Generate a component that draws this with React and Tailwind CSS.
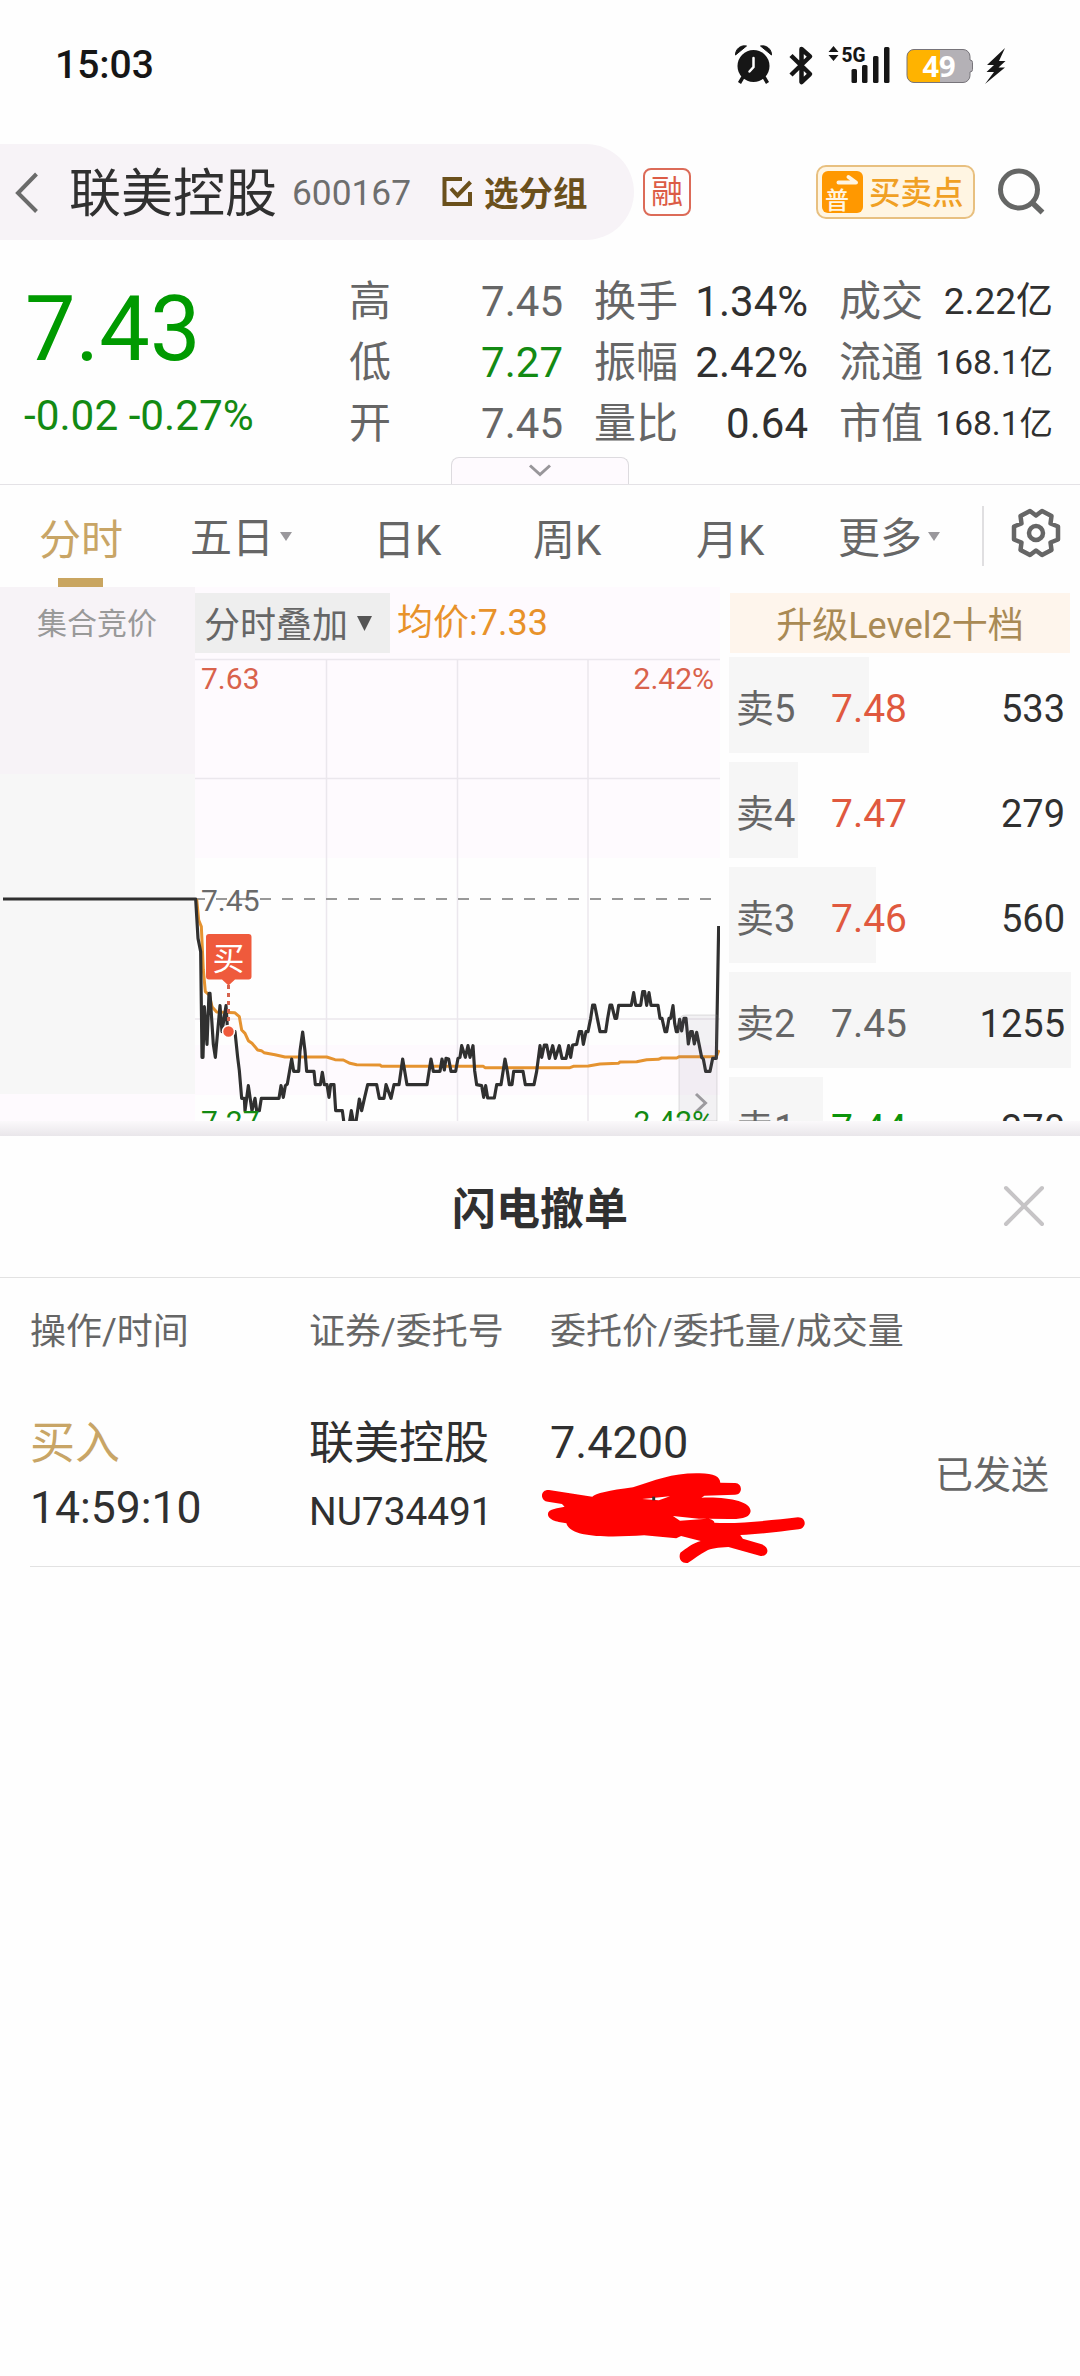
import clsx from "clsx";

const stats = [
  [
    { label: "高", value: "7.45", color: "text-[#666]" },
    { label: "低", value: "7.27", color: "text-[#138a13]" },
    { label: "开", value: "7.45", color: "text-[#666]" },
  ],
  [
    { label: "换手", value: "1.34%" },
    { label: "振幅", value: "2.42%" },
    { label: "量比", value: "0.64" },
  ],
  [
    { label: "成交", value: "2.22亿", size: "text-[37px]" },
    { label: "流通", value: "168.1亿", size: "text-[33.5px]" },
    { label: "市值", value: "168.1亿", size: "text-[33.5px]" },
  ],
];

const asks = [
  { label: "卖5", price: "7.48", qty: "533", bar: 140, color: "text-[#e0593f]" },
  { label: "卖4", price: "7.47", qty: "279", bar: 69, color: "text-[#e0593f]" },
  { label: "卖3", price: "7.46", qty: "560", bar: 147, color: "text-[#e0593f]" },
  { label: "卖2", price: "7.45", qty: "1255", bar: 342, color: "text-[#666]" },
  { label: "卖1", price: "7.44", qty: "370", bar: 94, color: "text-[#0b940b]" },
];

// both series are in thirds of a pixel, relative to (190, 860)
const pricePoints =
  "-561,117 17,117 24,235 32,275 36,592 39,592 43,440 51,553 57,400 60,400 70,553 76,592 90,437 96,515 108,437 113,515 135,515 143,592 148,632 155,715 163,715 165,752 175,677 186,752 195,715 200,752 208,752 214,715 267,715 273,677 280,712 286,677 292,672 305,597 311,634 326,634 330,573 338,516 345,573 350,634 372,634 376,674 391,674 397,637 403,674 411,674 417,712 422,674 432,674 437,752 457,752 462,790 478,790 484,752 490,785 498,785 508,717 515,752 524,712 533,674 560,674 568,715 582,715 588,674 603,715 612,674 627,674 638,597 651,674 711,674 723,597 730,634 750,634 756,597 763,630 768,595 776,597 783,634 797,634 804,595 810,592 815,557 826,592 834,557 840,592 849,557 854,632 860,674 875,677 881,712 887,677 893,714 913,714 920,674 933,674 945,597 952,634 958,674 966,674 971,634 999,634 1006,674 1032,674 1040,634 1050,557 1055,592 1063,555 1070,555 1078,595 1088,557 1096,595 1108,557 1116,595 1128,595 1136,557 1142,592 1148,555 1160,553 1168,515 1175,515 1180,553 1188,515 1194,515 1202,475 1208,435 1214,435 1222,475 1230,515 1247,515 1253,475 1260,435 1265,435 1275,475 1280,475 1286,436 1324,436 1331,398 1337,436 1352,436 1358,395 1364,395 1370,436 1377,398 1383,436 1404,436 1410,475 1416,475 1425,515 1430,515 1437,475 1442,475 1449,437 1454,490 1459,515 1463,515 1469,478 1475,513 1482,475 1488,475 1495,552 1502,515 1507,515 1513,552 1520,517 1528,557 1535,592 1540,597 1547,634 1560,634 1568,595 1579,595 1586,198";

const averagePoints =
  "20,117 26,180 34,200 40,330 46,395 58,405 66,440 80,456 134,458 148,470 155,510 165,520 175,542 186,550 203,570 214,572 222,578 255,584 285,591 410,591 435,599 460,600 480,610 500,614 570,615 575,619 880,619 885,623 1140,623 1150,619 1195,618 1230,612 1285,610 1290,606 1340,605 1370,599 1405,598 1415,594 1460,594 1468,590 1579,590 1587,570";

function StatusBar() {
  return (
    <div className="flex h-[144px] shrink-0 items-start justify-between pt-[41px] pl-[55px] text-[#161616]">
      <div className="text-[39px] leading-[48px] font-[550]">15:03</div>
      <svg width="345" height="50" viewBox="735 41 345 50" fill="currentColor">
        {/* alarm */}
        <circle cx="753.5" cy="66" r="16" />
        <path d="M735.5 55a9 9 0 0 1 11-9zM771.500 55a9 9 0 0 0-11-9z" stroke="currentColor" strokeLinejoin="round" />
        <path d="m743 77-3.500 6M764 77l3.500 6" stroke="currentColor" strokeWidth="3.500" />
        <path d="M753.500 58v9l-4 4.500" fill="none" stroke="#fff" strokeWidth="2.500" strokeLinecap="round" />
        {/* bluetooth */}
        <path d="M791 55.500 810 74l-8.500 8V49l8.500 7.500L791 75" fill="none" stroke="currentColor" strokeWidth="4.500" strokeLinejoin="round" />
        {/* signal */}
        <path d="m833.500 46 5 6h-10zM833.500 61l5-6h-10z" />
        <text x="841.500" y="61.500" fontSize="20.500" fontWeight="800" textLength="24" lengthAdjust="spacingAndGlyphs">5G</text>
        <rect x="851.500" y="69" width="5.500" height="14" rx="1.500" />
        <rect x="862" y="65" width="5.500" height="18" rx="1.500" />
        <rect x="873" y="56" width="5.500" height="27" rx="1.500" />
        <rect x="884" y="47" width="5.500" height="36" rx="1.500" />
        {/* battery */}
        <path d="M914 49.500h49a7 7 0 0 1 7 7v3.500q2.500 0 2.500 2.500v7q0 2.500-2.500 2.500V75.500a7 7 0 0 1-7 7h-49a7 7 0 0 1-7-7v-19a7 7 0 0 1 7-7z" fill="#b4b1b6" />
        <path d="M940 49.500h-26a7 7 0 0 0-7 7v19a7 7 0 0 0 7 7h26z" fill="#ffb300" />
        <path d="M914 49.500h49a7 7 0 0 1 7 7v3.500q2.500 0 2.500 2.500v7q0 2.500-2.500 2.500V75.500a7 7 0 0 1-7 7h-49a7 7 0 0 1-7-7v-19a7 7 0 0 1 7-7z" fill="none" stroke="#77747a" />
        <text x="939" y="76.500" fontSize="29" fontWeight="700" fill="#fff" textAnchor="middle" fontFamily="Noto Sans">49</text>
        <path d="m1005 48-18 17h7l-7.500 7h7.500l-9 12 20-16.500h-6.500l7-6.500h-6.500z" />
      </svg>
    </div>
  );
}

function Header() {
  return (
    <div className="flex h-24 shrink-0 items-center">
      <div className="flex h-24 w-[634px] items-center rounded-r-full bg-[#f7f3f7]">
        <svg className="ml-[14px]" width="26" height="44" viewBox="0 0 26 44" fill="none" stroke="#6b6b6b" strokeWidth="4">
          <path d="M22.500 4 4 23l18.500 18.500" />
        </svg>
        <div className="ml-[29px] w-[223px] pt-[6px] text-[52px] leading-[80px] text-[#303030]">联美控股</div>
        <div className="w-[150px] pt-[2px] text-[35.300px] leading-[80px] text-[#6e6e6e]">600167</div>
        <svg width="32" height="32" viewBox="0 0 32 32" fill="none" stroke="#6b501c" strokeWidth="4">
          <path d="M20 3H2.500v25H28V16" />
          <path d="m9 12.500 6.500 7L28.500 6" />
        </svg>
        <div className="ml-[10px] pt-[3px] text-[34.500px] leading-[80px] font-bold text-[#6b501c]">选分组</div>
      </div>
      <div className="ml-[9px] flex size-12 items-center justify-center rounded-lg border-2 border-[#dc6b58] text-[32px] leading-none text-[#dc5c46]">
        融
      </div>
      <div className="ml-[125px] flex h-[54px] w-[159px] items-center rounded-[10px] border-2 border-[#e8c080] bg-[#fff5e2] pl-[4px]">
        <svg width="41" height="42" viewBox="0 0 41 42">
          <rect width="41" height="42" rx="6" fill="#ff9800" />
          <path d="M16.500 11.500h17.500l-7.500-5.500" fill="none" stroke="#fff5e2" strokeWidth="4" strokeLinecap="round" strokeLinejoin="round" />
          <text x="3" y="37.500" fontSize="24" fontWeight="500" fill="#fff5e2">普</text>
        </svg>
        <div className="ml-[6px] pt-[3px] text-[31.500px] leading-[46px] font-medium text-[#f0a024]">买卖点</div>
      </div>
      <svg className="ml-[19px]" width="54" height="54" viewBox="0 0 54 54" fill="none" stroke="#656665" strokeWidth="5">
        <circle cx="25" cy="24.500" r="18.500" />
        <path d="m38 37.500 10.500 10" strokeWidth="5.500" />
      </svg>
    </div>
  );
}

function Quote() {
  return (
    <div className="relative flex h-[245px] shrink-0 border-b border-[#e4e2e6] pt-[31px]">
      <div className="w-[349px] pl-[24px] text-[#009a00]">
        <div className="h-[116px] pl-px text-[90px] leading-[118px]">7.43</div>
        <div className="text-[42.300px] leading-[58px] text-[#138a13]">-0.02 -0.27%</div>
      </div>
      {stats.map((column, i) => (
        <div key={i} className={clsx(i === 0 && "w-[214px]", i === 1 && "ml-[31px] w-[214px]", i === 2 && "ml-[31px] w-[214px]")}>
          {column.map((item) => (
            <div key={item.label} className="flex h-[61px] justify-between text-[42px] leading-[62px]">
              <span className="text-[#666]">{item.label}</span>
              <span className={clsx(item.color || "text-[#303030]", item.size)}>{item.value}</span>
            </div>
          ))}
        </div>
      ))}
      <div className="absolute bottom-0 left-[451px] flex h-[27px] w-[178px] justify-center rounded-t-lg border border-b-0 border-[#dddbdf] bg-[#fefafe]">
        <svg width="24" height="20" viewBox="0 0 24 20" fill="none" stroke="#98969a" strokeWidth="3">
          <path d="m2 7.500 10 9 10-9" />
        </svg>
      </div>
    </div>
  );
}

function Caret() {
  return (
    <svg className="ml-1.5" width="12" height="9" viewBox="0 0 12 9">
      <path d="M0 0h12L6 9z" fill="#9a989c" />
    </svg>
  );
}

function Tabs() {
  return (
    <div className="flex h-[102px] shrink-0 text-[42px] leading-[111px] text-[#666]">
      <div className="flex w-[150px] flex-col pl-[39px] text-[#c8a566]">
        <span className="h-[93px]">分时</span>
        <span className="ml-[19px] h-[9px] w-[45px] bg-[#c9a560]" />
      </div>
      <div className="flex h-[102px] w-[223px] items-center pl-[40px]">
        <span className="pt-[5px] leading-[90px]">五日</span>
        <Caret />
      </div>
      <div className="w-[160px]">日K</div>
      <div className="w-[163px]">周K</div>
      <div className="w-[142px]">月K</div>
      <div className="flex h-[102px] w-[144px] items-center">
        <span className="pt-[5px] leading-[90px]">更多</span>
        <Caret />
      </div>
      <div className="mt-[21px] h-[60px] w-[2px] bg-[#e0dfe1]" />
      <svg className="mt-[22px] ml-[26px]" width="52" height="52" viewBox="-26 -26 52 52" fill="none" stroke="#666" strokeWidth="4.500" strokeLinejoin="round">
        <path d="M-6-22 0-17.500 6-22 15.500-17 14.500-9.500 22-6.500V6.500L14.500 9.500 15.500 17 6 22 0 17.500-6 22-15.500 17-14.500 9.500-22 6.500V-6.500L-14.500-9.500-15.500-17z" />
        <circle r="7" />
      </svg>
    </div>
  );
}

function Chart() {
  return (
    <div className="w-[720px]">
      <div className="flex h-[66px] bg-[#fefafe]">
        <div className="w-[195px] bg-[#f7f3f7] pl-[37px] text-[30px] leading-[74px] text-[#999]">集合竞价</div>
        <div className="mt-[6px] flex h-[60px] w-[195px] items-center bg-[#eee] pl-[9px] text-[36px] text-[#666]">
          <span className="pt-[5px] leading-[54px]">分时叠加</span>
          <svg className="ml-[9px]" width="15" height="15" viewBox="0 0 15 15">
            <path d="M0 0h15L7.500 15z" fill="#555" />
          </svg>
        </div>
        <div className="ml-[7px] text-[36px] leading-[73px] text-[#e8922a]">均价:7.33</div>
      </div>
      <svg className="block" width="720" height="468" viewBox="0 653 720 468" fontSize="30">
        <rect y="653" width="195" height="121" fill="#f7f3f7" />
        <rect y="774" width="195" height="320" fill="#f7f7f7" />
        <rect y="1094" width="195" height="27" fill="#fefafe" />
        <rect x="195" y="653" width="525" height="205" fill="#fefafe" />
        <rect x="195" y="1045" width="525" height="50" fill="#fefafe" />
        <path d="M195 659.500h525M195 778.500h525M195 1019h525M326.500 659v462M457.500 659v462M588 659v462" stroke="#ebe7ed" strokeWidth="1.500" />
        <path d="M194 899h517" stroke="#999" strokeWidth="2" strokeDasharray="11 11" />
        <text x="201" y="689" fill="#d9624c">7.63</text>
        <text x="714" y="689" textAnchor="end" fill="#d9624c">2.42%</text>
        <text x="201" y="911" fill="#6a6a6a">7.45</text>
        <g transform="translate(190 860) scale(.333333)" fill="none" strokeLinejoin="round">
          <polyline points={averagePoints} stroke="#e59330" strokeWidth="9" />
          <polyline points={pricePoints} stroke="#303030" strokeWidth="9.500" />
        </g>
        <text x="201" y="1132" fill="#138a13">7.27</text>
        <path d="M679 1121v-99q0-7 7-7h31v106z" fill="#7a6a80" fillOpacity=".09" stroke="#888" strokeOpacity=".25" />
        <path d="m696 1094 9.500 9-9.500 9" fill="none" stroke="#9c9a9e" strokeWidth="3" />
        <text x="714" y="1132" textAnchor="end" fill="#138a13">2.42%</text>
        <path d="M228.500 985v40" stroke="#d5634e" strokeWidth="3" strokeDasharray="4 4" />
        <path d="M209 934h39.500q3 0 3 3v39.500q0 3-3 3H235l-6.500 6-6.500-6h-13q-3 0-3-3V937q0-3 3-3z" fill="#ef5a3c" />
        <text x="228.500" y="970" fontSize="32" textAnchor="middle" fill="#fff">买</text>
        <circle cx="228.500" cy="1031.500" r="6" fill="#ef5a3c" stroke="#fff" strokeWidth="1.500" />
      </svg>
    </div>
  );
}

function OrderBook() {
  return (
    <div className="ml-[9px] w-[342px] pt-[6px]">
      <div className="ml-px h-[60px] w-[340px] bg-[#fef5ec] text-center text-[36px] leading-[66px] text-[#a98a54]">
        升级Level2十档
      </div>
      <div className="mt-[4px] flex flex-col gap-[9px]">
        {asks.map((ask) => (
          <div key={ask.label} className="grid h-24 grid-cols-1 grid-rows-1">
            <div className="col-start-1 row-start-1 bg-[#f6f6f6]" style={{ width: ask.bar }} />
            <div className="z-10 col-start-1 row-start-1 flex pr-[6px] pl-[7px] text-[38px] leading-[104px]">
              <span className="w-[95px] text-[#666]">{ask.label}</span>
              <span className={clsx("text-[39px]", ask.color)}>{ask.price}</span>
              <span className="ml-auto text-[#303030]">{ask.qty}</span>
            </div>
          </div>
        ))}
      </div>
    </div>
  );
}

function CancelSheet() {
  return (
    <div className="flex flex-1 flex-col bg-[#fefefe]">
      <div className="flex h-[142px] items-center border-b border-[#e2e2e2] pl-[452px] text-[44px] font-bold text-[#303030]">
        <h2 className="pt-[6px] leading-[120px]">闪电撤单</h2>
        <svg className="mr-[35px] mb-px ml-auto" width="42" height="42" viewBox="0 0 42 42" stroke="#c6c4c6" strokeWidth="4" strokeLinecap="round">
          <path d="m3 3 36 36M39 3 3 39" />
        </svg>
      </div>
      <div className="flex h-[106px] pl-[30px] text-[36px] leading-[109px] text-[#666]">
        <span className="w-[279px]">操作/时间</span>
        <span className="w-[241px]">证券/委托号</span>
        <span>委托价/委托量/成交量</span>
      </div>
      <div className="ml-[30px] flex h-[183px] border-b border-[#e2e2e2] pt-[26px] text-[45px] text-[#303030]">
        <div className="w-[279px]">
          <div className="h-[65px] leading-[67px] text-[#c8a566]">买入</div>
          <div className="h-[65px] text-[44.500px] leading-[66px]">14:59:10</div>
        </div>
        <div className="w-[241px]">
          <div className="h-[65px] leading-[67px]">联美控股</div>
          <div className="h-[65px] text-[38.800px] leading-[73px]">NU734491</div>
        </div>
        <div className="w-[355px]">
          <div className="h-[62px] leading-[65px]">7.4200</div>
          {/* redacted amount */}
          <svg className="-ml-2" width="263" height="92" viewBox="114 216 711 276" preserveAspectRatio="none">
            <path
              fill="#f00"
              d="M133 270 250 290Q262 276 360 262C420 240 470 218 540 220C580 221 595 230 596 248L636 249C657 250 657 284 636 284L553 287 545 293C620 290 678 305 678 333C675 357 645 357 620 357L565 356Q580 360 580 368C650 372 740 360 806 352C830 352 830 385 808 388C760 395 700 402 650 405L657 416 708 433C730 440 728 470 705 468L618 441C590 443 570 445 558 453C540 463 525 478 508 489C490 492 482 475 488 458C505 445 520 430 543 423L490 408 477 415 390 406C300 412 190 415 180 370C160 366 130 362 130 342C130 325 160 325 175 320L168 312 130 305C108 303 108 268 133 270Z"
            />
            <path d="m468 348 70 8 22 0-73 6zM385 297l75-8-30 12z" fill="#fefefe" />
            <path d="M412 290h8v11h-8z" fill="#303030" />
          </svg>
        </div>
        <div className="pt-[32px] pl-[30px] text-[38px] leading-[67px] text-[#666]">已发送</div>
      </div>
    </div>
  );
}

export default function App() {
  return (
    <div
      lang="zh-CN"
      className="flex h-[2376px] w-[1080px] flex-col overflow-hidden bg-[#fefefe] font-['Roboto','Noto_Sans_CJK_SC',sans-serif] whitespace-nowrap"
    >
      <StatusBar />
      <Header />
      <Quote />
      <Tabs />
      <div className="flex h-[534px] shrink-0 overflow-hidden">
        <Chart />
        <OrderBook />
      </div>
      <div className="h-[15px] shrink-0 bg-linear-to-b from-[#fbf9fb] to-[#e9e6ea]" />
      <CancelSheet />
    </div>
  );
}
